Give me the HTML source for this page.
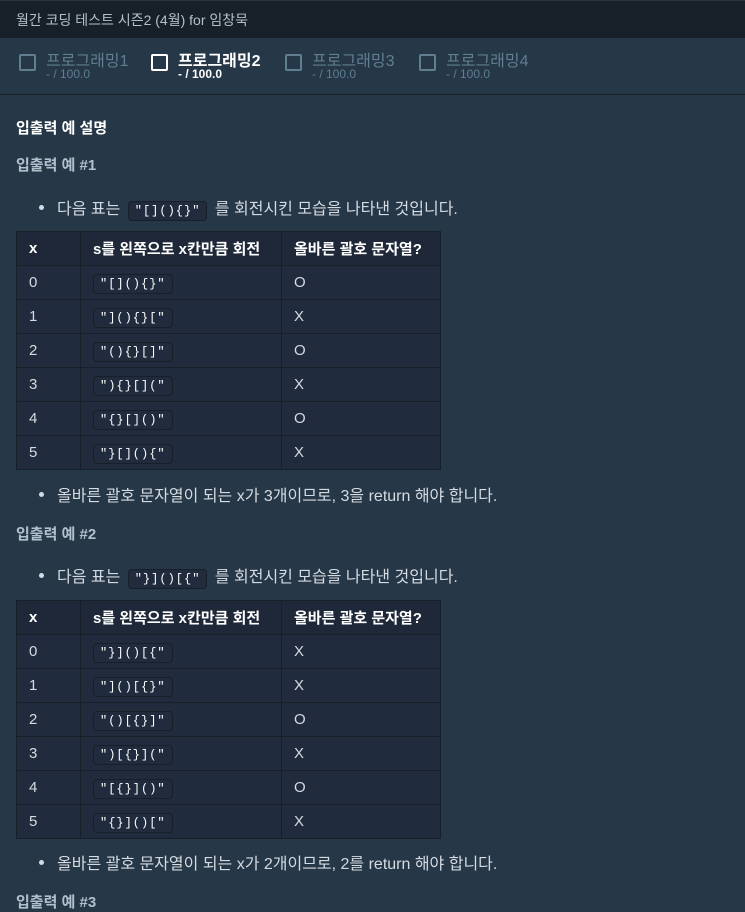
<!DOCTYPE html>
<html><head><meta charset="utf-8"><style>
*{margin:0;padding:0;box-sizing:border-box}
body{width:745px;height:910px;overflow:hidden;background:#263747;font-family:"Liberation Sans","Noto Sans CJK KR",sans-serif;color:#d5dbe2}
.top{height:38px;background:#172029;color:#b2c0cc;font-size:14px;line-height:38px;padding-left:16px;border-top:1px solid #2a3440}
.tabs{height:57px;background:#263747;border-bottom:1px solid #172029;position:relative}
.tab{position:absolute;top:9px}
.tab .cb{position:absolute;left:0;top:7px;width:17px;height:17px;border:2px solid #5f7f90;border-radius:2px}
.tab .t{position:absolute;left:27px;top:0;font-size:16px;color:#5f7f90;white-space:nowrap}
.tab .s{position:absolute;left:27px;top:20px;font-size:12px;color:#5f7f90;white-space:nowrap}
.tab.on .cb{border-color:#fff}.tab.on .t,.tab.on .s{color:#fff}
h4{font-size:15px;font-weight:bold;color:#fff;position:absolute;left:16px}
h5{font-size:15px;font-weight:bold;color:#b2c0cc;position:absolute;left:16px}
.li{position:absolute;left:57px;font-size:16px;color:#d5dbe2;white-space:nowrap}
.li:before{content:"";position:absolute;left:-18px;top:10px;width:5px;height:5px;border-radius:50%;background:#d5dbe2}
code{font-family:"Liberation Mono",monospace;font-size:12px;background:#202b3d;border:1px solid #172029;border-radius:4px;padding:2px 6px;color:#fff;letter-spacing:1px;margin:0 3px}
td code{margin:0}
table{position:absolute;left:16px;width:425px;border-collapse:collapse;font-size:15px}
td,th{border:1px solid #172029;height:34px;padding:0 12px;text-align:left;color:#d5dbe2;background:#202b3d}
th{color:#fff;font-weight:bold;background:#1e2838}
</style></head><body>
<div class="top">월간 코딩 테스트 시즌2 (4월) for 임창묵</div>
<div class="tabs">
<div class="tab" style="left:19px"><div class="cb"></div><div class="t">프로그래밍1</div><div class="s">- / 100.0</div></div>
<div class="tab on" style="left:151px"><div class="cb"></div><div class="t" style="font-weight:bold">프로그래밍2</div><div class="s" style="font-weight:bold">- / 100.0</div></div>
<div class="tab" style="left:285px"><div class="cb"></div><div class="t">프로그래밍3</div><div class="s">- / 100.0</div></div>
<div class="tab" style="left:419px"><div class="cb"></div><div class="t">프로그래밍4</div><div class="s">- / 100.0</div></div>
</div>
<h4 style="top:117px">입출력 예 설명</h4>
<h5 style="top:154px">입출력 예 #1</h5>
<div class="li" style="top:195px">다음 표는 <code>"[](){}"</code> 를 회전시킨 모습을 나타낸 것입니다.</div>
<table style="top:231px">
<tr><th style="width:64px">x</th><th style="width:201px">s를 왼쪽으로 x칸만큼 회전</th><th>올바른 괄호 문자열?</th></tr>
<tr><td>0</td><td><code>"[](){}"</code></td><td>O</td></tr>
<tr><td>1</td><td><code>"](){}["</code></td><td>X</td></tr>
<tr><td>2</td><td><code>"(){}[]"</code></td><td>O</td></tr>
<tr><td>3</td><td><code>"){}[]("</code></td><td>X</td></tr>
<tr><td>4</td><td><code>"{}[]()"</code></td><td>O</td></tr>
<tr><td>5</td><td><code>"}[](){"</code></td><td>X</td></tr>
</table>
<div class="li" style="top:482px">올바른 괄호 문자열이 되는 x가 3개이므로, 3을 return 해야 합니다.</div>
<h5 style="top:523px">입출력 예 #2</h5>
<div class="li" style="top:563px">다음 표는 <code>"}]()[{"</code> 를 회전시킨 모습을 나타낸 것입니다.</div>
<table style="top:600px">
<tr><th style="width:64px">x</th><th style="width:201px">s를 왼쪽으로 x칸만큼 회전</th><th>올바른 괄호 문자열?</th></tr>
<tr><td>0</td><td><code>"}]()[{"</code></td><td>X</td></tr>
<tr><td>1</td><td><code>"]()[{}"</code></td><td>X</td></tr>
<tr><td>2</td><td><code>"()[{}]"</code></td><td>O</td></tr>
<tr><td>3</td><td><code>")[{}]("</code></td><td>X</td></tr>
<tr><td>4</td><td><code>"[{}]()"</code></td><td>O</td></tr>
<tr><td>5</td><td><code>"{}]()["</code></td><td>X</td></tr>
</table>
<div class="li" style="top:850px">올바른 괄호 문자열이 되는 x가 2개이므로, 2를 return 해야 합니다.</div>
<h5 style="top:891px">입출력 예 #3</h5>
</body></html>
